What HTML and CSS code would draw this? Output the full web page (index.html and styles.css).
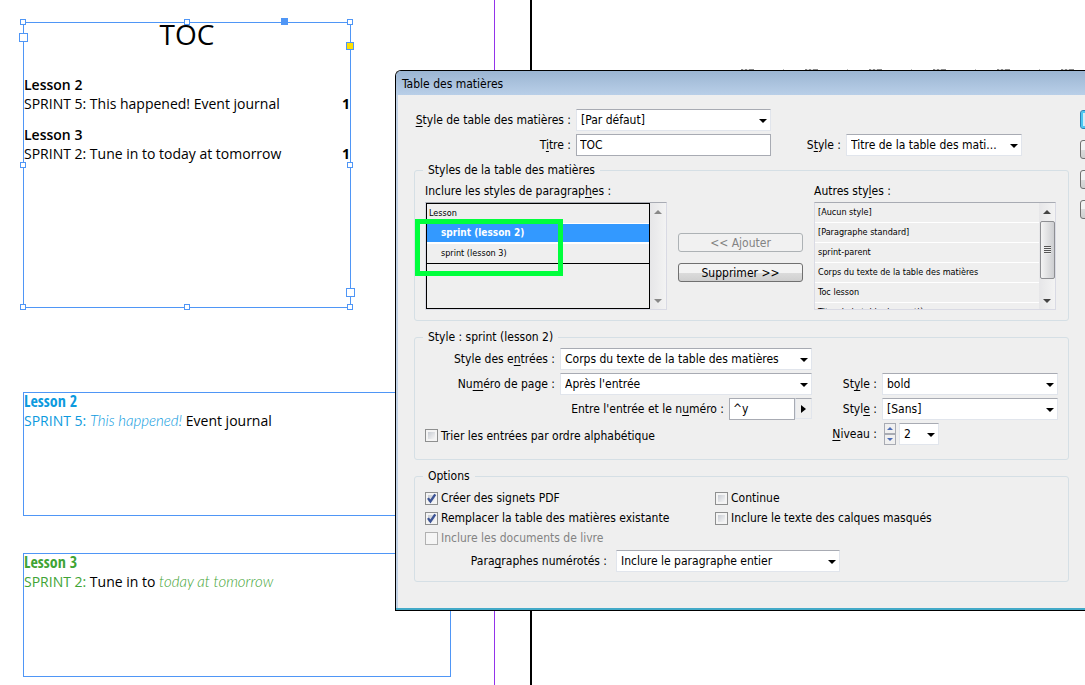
FILE: index.html
```html
<!DOCTYPE html>
<html lang="fr">
<head>
<meta charset="utf-8">
<title>Table des matières</title>
<link rel="stylesheet" href="styles.css">
</head>
<body>
<main class="pasteboard">
  <div class="guide guide-margin"></div>
  <div class="guide guide-page"></div>
  <div class="ruler-ticks"></div>

  <section class="frame frame-toc">
    <h1 class="toc-title">TOC</h1>
    <h2 class="toc-lesson">Lesson 2</h2>
    <p class="toc-entry"><span>SPRINT 5: This happened! Event journal</span><b>1</b></p>
    <h2 class="toc-lesson toc-next">Lesson 3</h2>
    <p class="toc-entry"><span>SPRINT 2: Tune in to today at tomorrow</span><b>1</b></p>
    <i class="handle top left"></i><i class="handle top center"></i><i class="handle top right"></i>
    <i class="handle middle left"></i><i class="handle middle right"></i>
    <i class="handle bottom left"></i><i class="handle bottom center"></i><i class="handle bottom right"></i>
    <i class="handle anchor"></i>
    <i class="handle port port-in"></i><i class="handle port port-out"></i>
    <i class="handle corner-edit"></i>
  </section>

  <section class="frame frame-story story-blue">
    <h2 class="story-title">Lesson 2</h2>
    <p class="story-line"><span class="tint">SPRINT 5:</span> <span class="script tint">This happened!</span> Event journal</p>
  </section>

  <section class="frame frame-story story-green">
    <h2 class="story-title">Lesson 3</h2>
    <p class="story-line"><span class="tint">SPRINT 2:</span> Tune in to <span class="script tint">today at tomorrow</span></p>
  </section>

  <form class="dialog">
    <header class="titlebar">Table des matières</header>
    <div class="dialog-body">
      <div class="settings">
        <div class="head">
          <label for="toc-style"><u>S</u>tyle de table des matières :</label>
          <span class="select"><select id="toc-style"><option>[Par défaut]</option></select></span>
          <label for="title" class="second">T<u>i</u>tre :</label>
          <input id="title" class="text" type="text" value="TOC">
          <label for="title-style">S<u>t</u>yle :</label>
          <span class="select"><select id="title-style"><option>Titre de la table des mati...</option></select></span>
        </div>

        <fieldset class="group">
          <legend>Styles de la table des matières</legend>
          <div class="styles-grid">
            <div class="list-block">
              <h3 class="list-label">Inclure les styles de paragrap<u>h</u>es :</h3>
              <div class="listbox">
                <div class="included">
                  <ul class="items items-included">
                    <li>Lesson</li>
                    <li class="nested selected">sprint (lesson 2)</li>
                    <li class="nested">sprint (lesson 3)</li>
                  </ul>
                </div>
                <div class="scrollbar idle"><i class="up"></i><i class="down"></i></div>
              </div>
              <div class="highlight"></div>
            </div>
            <div class="transfer">
              <button type="button" class="push" disabled>&lt;&lt; Ajouter</button>
              <button type="button" class="push">Supprimer &gt;&gt;</button>
            </div>
            <div class="list-block">
              <h3 class="list-label">Autres sty<u>l</u>es :</h3>
              <div class="listbox">
                <ul class="items items-other">
                  <li>[Aucun style]</li>
                  <li>[Paragraphe standard]</li>
                  <li>sprint-parent</li>
                  <li>Corps du texte de la table des matières</li>
                  <li>Toc lesson</li>
                  <li>Titre de la table des matières</li>
                </ul>
                <div class="scrollbar"><i class="up"></i><span class="thumb"></span><i class="down"></i></div>
              </div>
            </div>
          </div>
        </fieldset>

        <fieldset class="group">
          <legend>Style : sprint (lesson 2)</legend>
          <div class="entry-grid">
            <label for="entry-style">Style des e<u>n</u>trées :</label>
            <span class="select"><select id="entry-style"><option>Corps du texte de la table des matières</option></select></span>
            <label for="page-number" class="first">Nu<u>m</u>éro de page :</label>
            <span class="select"><select id="page-number"><option>Après l'entrée</option></select></span>
            <label for="number-style">St<u>y</u>le :</label>
            <span class="select"><select id="number-style"><option>bold</option></select></span>
            <div class="between">
              <label for="between">Entre l'entrée et le n<u>u</u>méro :</label>
              <span class="combo"><input id="between" class="text" type="text" value="^y"><button type="button" class="flyout" aria-label="Caractères spéciaux"></button></span>
            </div>
            <label for="between-style">Styl<u>e</u> :</label>
            <span class="select"><select id="between-style"><option>[Sans]</option></select></span>
            <label class="check wide"><input type="checkbox"><span>Trier les entrées par ordre alphabétique</span></label>
            <label for="level"><u>N</u>iveau :</label>
            <div class="level">
              <span class="spinner"><button type="button" aria-label="Augmenter"><i class="up"></i></button><button type="button" aria-label="Diminuer"><i class="down"></i></button></span>
              <span class="select"><select id="level"><option>2</option></select></span>
            </div>
          </div>
        </fieldset>

        <fieldset class="group">
          <legend>Options</legend>
          <div class="options">
            <div class="options-grid">
              <label class="check"><input type="checkbox" checked><span>Créer des signets PDF</span></label>
              <label class="check"><input type="checkbox"><span>Continue</span></label>
              <label class="check"><input type="checkbox" checked><span>Remplacer la table des matières existante</span></label>
              <label class="check"><input type="checkbox"><span>Inclure le texte des calques masqués</span></label>
              <label class="check"><input type="checkbox" disabled><span>Inclure les documents de livre</span></label>
            </div>
            <div class="numbered">
              <label for="numbered">Para<u>g</u>raphes numérotés :</label>
              <span class="select"><select id="numbered"><option>Inclure le paragraphe entier</option></select></span>
            </div>
          </div>
        </fieldset>
      </div>

      <div class="actions">
        <button type="button" class="push default" aria-label="OK"></button>
        <button type="button" class="push" aria-label="Annuler"></button>
        <button type="button" class="push" aria-label="Enregistrer le style"></button>
        <button type="button" class="push" aria-label="Moins d'options"></button>
      </div>
    </div>
  </form>
</main>
</body>
</html>
```

FILE: styles.css
```css
* { box-sizing: border-box; }
body { margin: 0; background: #fff; color: #000; }
h1, h2, h3, p, ul { margin: 0; padding: 0; font-weight: normal; }
ul { list-style: none; }

.pasteboard {
  position: relative;
  min-height: 100vh;
  overflow: hidden;
  font-family: "Open Sans", "Noto Sans", sans-serif;
}

.guide { position: absolute; top: 0; bottom: 0; }
.guide-margin { left: 494px; width: 1px; background: #9333ea; }
.guide-page { left: 530px; width: 2px; background: #000; }
.ruler-ticks {
  position: absolute;
  top: 69px;
  left: 741px;
  right: 0;
  height: 1px;
  background: repeating-linear-gradient(90deg, #888 0 2px, #ddd 2px 4px, #888 4px 6px, #ddd 6px 8px, #888 8px 13px, transparent 13px 42px, #bbb 42px 43px, transparent 43px 64px);
}

/* Document frames */
.frame { position: absolute; border: 1px solid #4f96f6; }
.frame-toc { left: 23px; top: 22px; width: 328px; height: 286px; font-size: 14px; line-height: 19px; }
.toc-title { font-size: 28px; line-height: 22px; font-weight: 400; text-align: center; }
.toc-lesson { margin-top: 30px; font-size: 14px; line-height: 19px; font-weight: 600; }
.toc-next { margin-top: 12px; }
.toc-entry { display: flex; justify-content: space-between; }

.handle { position: absolute; width: 6px; height: 6px; background: #fff; outline: 1px solid #4f96f6; outline-offset: -1px; }
.top { top: -4px; }
.middle { top: 139px; }
.bottom { bottom: -3px; }
.left { left: -4px; }
.center { left: 160px; }
.right { right: -3px; }
.handle.anchor { top: -5px; left: 257px; width: 7px; height: 7px; background: #4f96f6; }
.handle.port { width: 9px; height: 9px; }
.handle.port-in { left: -5px; top: 10px; }
.handle.port-out { right: -5px; bottom: 10px; }
.handle.corner-edit { right: -4px; top: 19px; width: 8px; height: 8px; background: #ffe000; }

.frame-story { left: 23px; width: 428px; height: 124px; }
.story-blue { top: 392px; --tint: #0c9ade; }
.story-green { top: 553px; --tint: #3fa435; }
.story-title { color: var(--tint); font-family: "Open Sans Condensed", "Open Sans", sans-serif; font-size: 16px; line-height: 17px; font-weight: 700; }
.story-line { font-size: 14px; line-height: 20px; white-space: nowrap; }
.tint { color: var(--tint); }
.script { font-family: Lato, cursive; font-style: italic; font-weight: 300; font-size: 15px; }

/* Dialog window */
.dialog {
  position: absolute;
  left: 395px;
  right: 0;
  top: 70px;
  border: 1px solid #000;
  border-right: 0;
  border-top-left-radius: 6px;
  background: #efefef;
  box-shadow: inset 0 -2px 0 #43aac8, inset 2px 0 0 #c3d3e6;
  font-family: "DejaVu Sans Condensed", "DejaVu Sans", sans-serif;
  font-size: 12px;
  line-height: 16px;
}
.titlebar {
  height: 24px;
  padding: 5px 6px;
  border-top-left-radius: 5px;
  background: linear-gradient(#9bb5d2, #b9cfe8);
}
.dialog-body { display: flex; gap: 11px; padding: 14px 0 28px 18px; overflow: hidden; }
.settings { flex: 1; min-width: 0; }
u { text-underline-offset: 2px; }
label { white-space: nowrap; }

.head {
  display: grid;
  grid-template-columns: 157px 195px 1fr 176px;
  gap: 3px 5px;
  align-items: center;
  margin-right: 47px;
  margin-bottom: 6px;
  text-align: right;
}
.head .second { grid-column: 1; }

.select { position: relative; display: block; height: 22px; }
.select::after {
  content: "";
  position: absolute;
  right: 4px;
  top: 10px;
  border: 4px solid transparent;
  border-top-color: #000;
  border-bottom: 0;
  pointer-events: none;
}
select, .text {
  display: block;
  width: 100%;
  height: 22px;
  margin: 0;
  padding: 0 4px;
  border: 1px solid #e1e5ec;
  border-top-color: #a8abb3;
  border-radius: 0;
  background: #fff;
  color: #000;
  font: inherit;
  appearance: none;
}
.text { border-color: #a8abb3; padding: 0 3px; }

.group {
  min-width: 0;
  margin: 0 0 8px;
  padding: 0;
  border: 1px solid #d5dfe5;
  border-radius: 3px;
  box-shadow: none;
}
.group:last-child { margin-bottom: 0; }
legend { height: 16px; margin-left: 8px; padding: 0 5px; }

/* Paragraph style lists */
.styles-grid { display: grid; grid-template-columns: 1fr 125px 1fr; gap: 11px; padding: 5px 12px 10px 10px; }
.list-block { position: relative; min-width: 0; }
.list-label { font-size: 12px; line-height: 16px; margin-bottom: 3px; }
.listbox { display: flex; height: 108px; border: 1px solid #d9dae4; border-top-color: #a8abb3; overflow: hidden; font-size: 9px; }
.included { flex: 1; border: 1px solid #000; }
.items { flex: 1; min-width: 0; }
.items li { height: 20px; padding: 0 3px; line-height: 19px; border-bottom: 1px solid #fff; white-space: nowrap; }
.items-included { border-bottom: 1px solid #000; }
.items-included li { padding-left: 2px; line-height: 18px; }
.items-included li:last-child { height: 19px; border-bottom: 0; }
.items .nested { padding-left: 14px; }
.items .selected { background: #3399ff; color: #fff; font-size: 10px; line-height: 17px; font-weight: bold; border-bottom-width: 2px; }
.scrollbar { flex: none; width: 16px; display: flex; flex-direction: column; align-items: center; justify-content: space-between; padding: 7px 0 6px; background: linear-gradient(90deg, #e6e6e8, #f3f3f3); }
.up, .down { border: 4px solid transparent; }
.up { border-bottom-color: #444; border-top: 0; }
.down { border-top-color: #444; border-bottom: 0; }
.idle .up { border-bottom-color: #888; }
.idle .down { border-top-color: #888; }
.thumb {
  width: 15px;
  height: 58px;
  margin: 7px 0 auto;
  border: 1px solid #8e8f93;
  border-radius: 2px;
  background:
    repeating-linear-gradient(#555 0 1px, #eee 1px 2px) center / 7px 8px no-repeat,
    linear-gradient(90deg, #f4f4f4, #cdced1);
}
.highlight { position: absolute; left: -10px; top: 36px; width: 148px; height: 57px; border: 5px solid #00ff3c; }

.transfer { display: grid; align-content: start; gap: 11px; padding-top: 50px; }
.push {
  height: 19px;
  padding: 0;
  border: 1px solid #707070;
  border-radius: 3px;
  background: linear-gradient(#f3f3f3 0 50%, #dcdcdc 50%, #cfcfcf);
  color: #000;
  font: inherit;
  line-height: 16px;
}
.push:disabled { border-color: #adb2b5; background: #f1f1f1; color: #838383; }

/* Entry settings */
.entry-grid {
  display: grid;
  grid-template-columns: 140px 252px 1fr 176px;
  grid-auto-rows: 22px;
  gap: 3px 5px;
  align-items: center;
  padding: 3px 10px 14px 0;
}
.entry-grid > label { text-align: right; }
.entry-grid .first { grid-column: 1; }
.between { grid-column: 1 / 3; display: flex; align-items: center; justify-content: flex-end; gap: 5px; }
.combo { display: flex; width: 83px; }
.flyout { flex: none; display: grid; place-items: center; width: 17px; height: 21px; padding: 0; border: 1px solid #e1e5ec; border-top-color: #a8abb3; background: #efefef; }
.flyout::before { content: ""; border: 4px solid transparent; border-left: 5px solid #000; border-right: 0; }
.level { display: flex; gap: 3px; padding-left: 2px; }
.level .select { width: 40px; }
.spinner { display: grid; width: 12px; height: 22px; }
.spinner button { display: grid; place-items: center; padding: 0; border: 1px solid #a8abb3; background: #f0f0f0; }
.spinner i { border-width: 3px; }
.spinner .up { border-bottom-color: #4d6cb5; }
.spinner .down { border-top-color: #4d6cb5; }

.check { display: flex; align-items: center; gap: 3px; }
.entry-grid .wide { grid-column: 1 / 3; padding-left: 10px; padding-top: 3px; }
.check input {
  flex: none;
  width: 13px;
  height: 13px;
  margin: 0;
  appearance: none;
  border: 1px solid #8e8f8f;
  background: linear-gradient(135deg, #c8ccd3, #f6f6f6) content-box, #f4f4f4;
  padding: 2px;
}
.check input:checked {
  background: url("data:image/svg+xml,%3Csvg xmlns='http://www.w3.org/2000/svg' viewBox='0 0 11 11'%3E%3Cpath d='M2.5 5.2 4.6 8 8.7 2' fill='none' stroke='%233d5494' stroke-width='2'/%3E%3C/svg%3E") border-box, linear-gradient(135deg, #c8ccd3, #f6f6f6) content-box, #f4f4f4;
}
.check input:disabled { border-color: #b1b1b1; background: #f5f5f5; }
.check input:disabled + span { color: #838383; }

.options { padding: 4px 10px 9px; }
.options-grid { display: grid; grid-template-columns: 290px 1fr; grid-auto-rows: 20px; }
.numbered { display: grid; grid-template-columns: 182px 224px; gap: 9px; align-items: center; margin-top: 2px; text-align: right; }

/* Command buttons, running off the right edge */
.actions { flex: none; width: 5px; display: grid; align-content: start; gap: 11px; padding-top: 1px; }
.actions .push { width: 75px; }
.actions .default { border-color: #2c7fb0; background: #d3edf9; box-shadow: inset 0 0 0 2px #4cc8f2; }
```
